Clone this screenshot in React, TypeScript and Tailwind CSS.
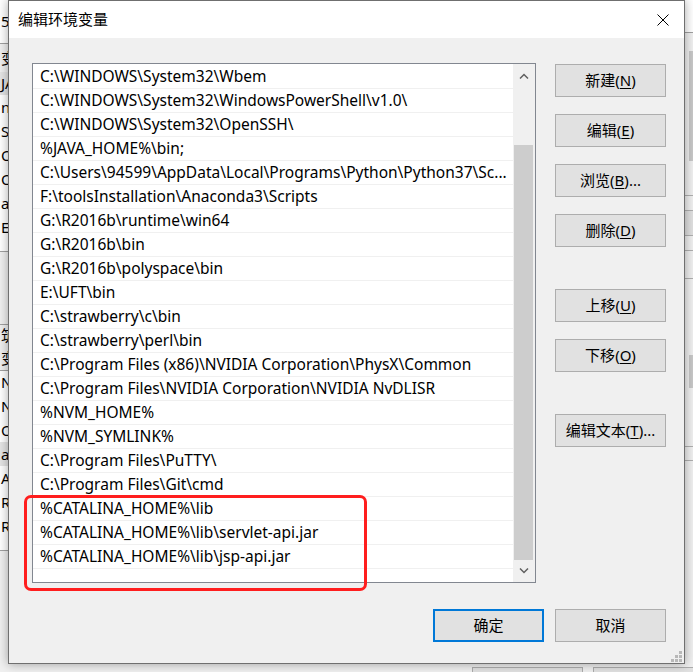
import React from "react";

const rows = [
  "C:\\WINDOWS\\System32\\Wbem",
  "C:\\WINDOWS\\System32\\WindowsPowerShell\\v1.0\\",
  "C:\\WINDOWS\\System32\\OpenSSH\\",
  "%JAVA_HOME%\\bin;",
  "C:\\Users\\94599\\AppData\\Local\\Programs\\Python\\Python37\\Sc...",
  "F:\\toolsInstallation\\Anaconda3\\Scripts",
  "G:\\R2016b\\runtime\\win64",
  "G:\\R2016b\\bin",
  "G:\\R2016b\\polyspace\\bin",
  "E:\\UFT\\bin",
  "C:\\strawberry\\c\\bin",
  "C:\\strawberry\\perl\\bin",
  "C:\\Program Files (x86)\\NVIDIA Corporation\\PhysX\\Common",
  "C:\\Program Files\\NVIDIA Corporation\\NVIDIA NvDLISR",
  "%NVM_HOME%",
  "%NVM_SYMLINK%",
  "C:\\Program Files\\PuTTY\\",
  "C:\\Program Files\\Git\\cmd",
  "%CATALINA_HOME%\\lib",
  "%CATALINA_HOME%\\lib\\servlet-api.jar",
  "%CATALINA_HOME%\\lib\\jsp-api.jar",
];

const FONT = '"Noto Sans", "Noto Sans CJK SC", sans-serif';

function Btn({
  label,
  k,
  tail = "",
  mt = "",
  primary = false,
}: {
  label: string;
  k?: string;
  tail?: string;
  mt?: string;
  primary?: boolean;
}) {
  return (
    <div
      className={`${mt} w-[111px] h-[33px] flex items-center justify-center bg-[#e1e1e1] text-[15px] text-black ${
        primary ? "border-2 border-[#0078d7]" : "border border-[#adadad]"
      }`}
    >
      <span>
        {label}
        {k ? (
          <>
            (<span className="underline underline-offset-2">{k}</span>)
          </>
        ) : null}
        {tail}
      </span>
    </div>
  );
}

function LeftBg() {
  const items: { h: number; t: string; bg: string; line?: boolean }[] = [
    { h: 43, t: "59", bg: "bg-white" },
    { h: 29, t: "变", bg: "bg-[#f0f0f0]", line: true },
    { h: 23, t: "JA", bg: "bg-[#e5e5e5]" },
    { h: 24, t: "nt", bg: "bg-white" },
    { h: 24, t: "SS", bg: "bg-white" },
    { h: 24, t: "Or", bg: "bg-white" },
    { h: 24, t: "Or", bg: "bg-white" },
    { h: 24, t: "a", bg: "bg-white" },
    { h: 24, t: "E", bg: "bg-white" },
    { h: 12, t: "", bg: "bg-white" },
    { h: 73, t: "", bg: "bg-[#f0f0f0]", line: true },
    { h: 22, t: "筑", bg: "bg-[#f0f0f0]", line: true },
    { h: 24, t: "变", bg: "bg-[#f0f0f0]" },
    { h: 24, t: "NV", bg: "bg-white", line: true },
    { h: 24, t: "NV", bg: "bg-white" },
    { h: 24, t: "OS", bg: "bg-white" },
    { h: 24, t: "a", bg: "bg-[#e5e5e5]" },
    { h: 24, t: "A", bg: "bg-white" },
    { h: 24, t: "R", bg: "bg-white" },
    { h: 24, t: "R", bg: "bg-white" },
    { h: 12, t: "", bg: "bg-white" },
    { h: 100, t: "", bg: "bg-[#f0f0f0]", line: true },
  ];
  return (
    <div className="absolute left-0 top-0 w-[20px] h-full flex flex-col overflow-hidden bg-[#f0f0f0]">
      {items.map((it, i) => (
        <div
          key={i}
          className={`${it.bg} ${it.line ? "border-t border-[#a0a0a0]" : ""} flex items-center overflow-hidden text-[15px] text-black leading-none`}
          style={{ height: it.h }}
        >
          <span className="pl-[1px] whitespace-nowrap">{it.t}</span>
        </div>
      ))}
    </div>
  );
}

function RightBg() {
  return (
    <div className="absolute right-0 top-0 w-[12px] h-full bg-[#f0f0f0] flex flex-col">
      <div className="h-[33px] bg-white border-b border-[#a0a0a0]" />
      <div className="h-[162px] flex justify-end pt-[18px]">
        <div className="w-[4px] h-[110px] bg-[#c8c8c8]" />
      </div>
      <div className="h-[15px] border-t border-[#b0b0b0]" />
      <div className="h-[25px] border-t border-[#b0b0b0] bg-[#e0e0e0]" />
      <div className="h-[15px] border-t border-[#b0b0b0]" />
      <div className="h-[28px] border-t border-[#b0b0b0]" />
      <div className="h-[168px] border-t border-[#b0b0b0] flex justify-end pt-[76px]">
        <div className="w-[4px] h-[33px] bg-[#c8c8c8]" />
      </div>
      <div className="h-[14px] border-t border-[#b0b0b0]" />
      <div className="flex-1 border-t border-[#b0b0b0]" />
    </div>
  );
}

function Grip() {
  const dots = [
    [8, 0],
    [4, 4],
    [8, 4],
    [0, 8],
    [4, 8],
    [8, 8],
  ];
  return (
    <div className="absolute right-[2px] bottom-[1px] w-[11px] h-[11px]">
      {dots.map(([x, y], i) => (
        <div
          key={i}
          className="absolute w-[3px] h-[3px] bg-[#b8b8b8]"
          style={{ left: x, top: y }}
        />
      ))}
    </div>
  );
}

export default function App() {
  return (
    <div
      className="relative w-[693px] h-[672px] overflow-hidden bg-[#f0f0f0]"
      style={{ fontFamily: FONT }}
    >
      <LeftBg />
      <RightBg />
      {/* background buttons below dialog */}
      <div className="absolute left-[472px] top-[667px] w-[111px] h-[20px] border border-[#adadad] bg-[#e1e1e1]" />
      <div className="absolute left-[593px] top-[667px] w-[111px] h-[20px] border border-[#adadad] bg-[#e1e1e1]" />

      {/* dialog */}
      <div className="absolute left-[8px] top-0 w-[677px] h-[664px] border border-[#6f6f6f] bg-[#f0f0f0] flex flex-col shadow-[0_0_10px_rgba(0,0,0,0.35)]">
        <div className="h-[37px] bg-white flex items-center justify-between pl-[9px] pr-[15px]">
          <span className="text-[15px] text-black">编辑环境变量</span>
          <svg width="12" height="12" viewBox="0 0 12 12">
            <path d="M0.5 0.5 L11.5 11.5 M11.5 0.5 L0.5 11.5" stroke="#000" strokeWidth="1" />
          </svg>
        </div>

        <div className="flex pl-[23px] pt-[25px]">
          {/* list box */}
          <div className="w-[504px] h-[520px] border border-[#828790] bg-white flex">
            <div className="w-[480px] pt-[1px] flex flex-col">
              {rows.map((r, i) => (
                <div
                  key={i}
                  className="h-[24px] border-b border-[#f0f0f0] flex items-center pl-[7px] text-[15.5px] text-black whitespace-nowrap overflow-hidden"
                >
                  {r}
                </div>
              ))}
            </div>
            <div className="w-[22px] bg-[#f0f0f0] flex flex-col">
              <div className="h-[24px] flex items-center justify-center">
                <svg width="10" height="6" viewBox="0 0 10 6">
                  <path d="M1 5.5 L5 1.5 L9 5.5" fill="none" stroke="#606060" strokeWidth="1.5" />
                </svg>
              </div>
              <div className="h-[57px]" />
              <div className="ml-[1px] w-[19px] h-[415px] bg-[#cdcdcd]" />
              <div className="flex-1 flex items-center justify-center">
                <svg width="10" height="6" viewBox="0 0 10 6">
                  <path d="M1 0.5 L5 4.5 L9 0.5" fill="none" stroke="#606060" strokeWidth="1.5" />
                </svg>
              </div>
            </div>
          </div>

          {/* buttons */}
          <div className="ml-[19px] mt-[1px] flex flex-col">
            <Btn label="新建" k="N" />
            <Btn label="编辑" k="E" mt="mt-[17px]" />
            <Btn label="浏览" k="B" tail="..." mt="mt-[17px]" />
            <Btn label="删除" k="D" mt="mt-[17px]" />
            <Btn label="上移" k="U" mt="mt-[42px]" />
            <Btn label="下移" k="O" mt="mt-[17px]" />
            <Btn label="编辑文本" k="T" tail="..." mt="mt-[42px]" />
          </div>
        </div>

        <div className="flex justify-end gap-[11px] pr-[18px] mt-[26px]">
          <Btn label="确定" primary />
          <Btn label="取消" />
        </div>

        <Grip />
      </div>

      {/* red annotation */}
      <div className="absolute left-[24px] top-[495px] w-[343px] h-[96px] border-[3px] border-[#ff1e1e] rounded-[7px]" />
    </div>
  );
}
